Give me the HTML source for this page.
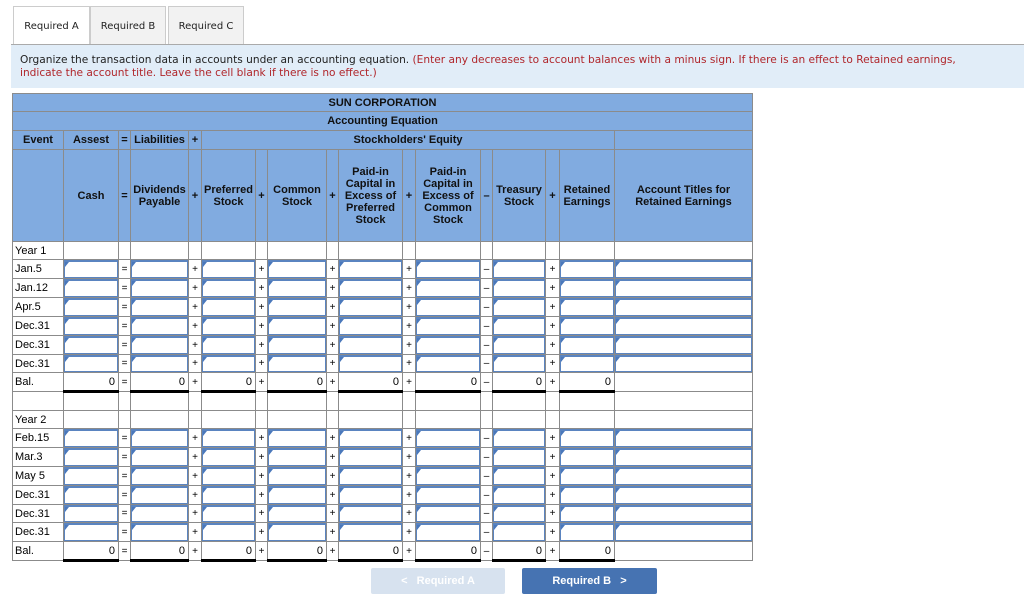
<!DOCTYPE html>
<html><head><meta charset="utf-8"><style>
body{margin:0;background:#fff;font-family:"Liberation Sans",Arial,sans-serif;width:1024px;height:601px;overflow:hidden;position:relative}
.tabs{position:absolute;left:13px;top:6px;height:38px}
.tab{position:absolute;top:0;height:38px;border:1px solid #ccc;border-bottom:none;background:#f2f2f2;font-family:"DejaVu Sans",sans-serif;font-size:10px;line-height:40px;text-align:center;color:#222}
.bar{position:absolute;left:11px;top:44px;width:1013px;height:43px;background:#e1edf8;border-top:1px solid #aaa}
.bar p{margin:0;padding:9px 0 0 9px;width:972px;font-family:"DejaVu Sans",sans-serif;font-size:10.6px;line-height:13px;color:#222}
.bar span{color:#b0262b}
table{position:absolute;left:12px;top:93px;border-collapse:collapse;table-layout:fixed;font-size:11px}
td{border:1px solid #8b8b8b;padding:0;overflow:hidden;white-space:nowrap}
.h td{background:#81abe0;font-weight:bold;text-align:center;color:#111}
td.ev{padding-left:2px;text-align:left}
td.op{text-align:center;font-size:10px}
td.in{position:relative}
td.in div{position:absolute;left:0;top:0;right:0;bottom:0;border:1px solid #5a84c0;border-top-width:2px;background:#fff}
td.in div:before{content:"";position:absolute;left:0;top:0;border-top:5px solid #4a78bb;border-right:4px solid transparent}
td.v{text-align:right;padding-right:3px;border-bottom:3px solid #000}
.btn{position:absolute;top:568px;height:26px;font-size:11px;font-weight:bold;color:#fff;text-align:center;line-height:26px;border-radius:2px}
</style></head><body>
<div class="tabs">
<div class="tab" style="left:0;width:75px;background:#fff;height:39px">Required A</div>
<div class="tab" style="left:77px;width:74px">Required B</div>
<div class="tab" style="left:155px;width:74px">Required C</div>
</div>
<div class="bar"><p>Organize the transaction data in accounts under an accounting equation. <span>(Enter any decreases to account balances with a minus sign. If there is an effect to Retained earnings, indicate the account title. Leave the cell blank if there is no effect.)</span></p></div>

<table>
<colgroup>
<col style="width:51px"><col style="width:55px"><col style="width:12px"><col style="width:58px"><col style="width:13px"><col style="width:54px"><col style="width:12px"><col style="width:59px"><col style="width:12px"><col style="width:64px"><col style="width:13px"><col style="width:65px"><col style="width:12px"><col style="width:53px"><col style="width:14px"><col style="width:55px"><col style="width:138px">
</colgroup>
<tr class="h" style="height:18px"><td colspan="17">SUN CORPORATION</td></tr>
<tr class="h" style="height:19px"><td colspan="17">Accounting Equation</td></tr>
<tr class="h" style="height:19px"><td>Event</td><td>Assest</td><td>=</td><td>Liabilities</td><td>+</td><td colspan="11">Stockholders' Equity</td><td></td></tr>
<tr class="h" style="height:92px;line-height:12px"><td></td><td>Cash</td><td>=</td><td>Dividends<br>Payable</td><td>+</td><td>Preferred<br>Stock</td><td>+</td><td>Common<br>Stock</td><td>+</td><td>Paid-in<br>Capital in<br>Excess of<br>Preferred<br>Stock</td><td>+</td><td>Paid-in<br>Capital in<br>Excess of<br>Common<br>Stock</td><td>–</td><td>Treasury<br>Stock</td><td>+</td><td>Retained<br>Earnings</td><td>Account Titles for<br>Retained Earnings</td></tr>
<tr style="height:18px"><td class="ev">Year 1</td><td></td><td></td><td></td><td></td><td></td><td></td><td></td><td></td><td></td><td></td><td></td><td></td><td></td><td></td><td></td><td></td></tr>
<tr style="height:19px"><td class="ev">Jan.5</td><td class="in"><div></div></td><td class="op">=</td><td class="in"><div></div></td><td class="op">+</td><td class="in"><div></div></td><td class="op">+</td><td class="in"><div></div></td><td class="op">+</td><td class="in"><div></div></td><td class="op">+</td><td class="in"><div></div></td><td class="op">–</td><td class="in"><div></div></td><td class="op">+</td><td class="in"><div></div></td><td class="in"><div></div></td></tr>
<tr style="height:19px"><td class="ev">Jan.12</td><td class="in"><div></div></td><td class="op">=</td><td class="in"><div></div></td><td class="op">+</td><td class="in"><div></div></td><td class="op">+</td><td class="in"><div></div></td><td class="op">+</td><td class="in"><div></div></td><td class="op">+</td><td class="in"><div></div></td><td class="op">–</td><td class="in"><div></div></td><td class="op">+</td><td class="in"><div></div></td><td class="in"><div></div></td></tr>
<tr style="height:19px"><td class="ev">Apr.5</td><td class="in"><div></div></td><td class="op">=</td><td class="in"><div></div></td><td class="op">+</td><td class="in"><div></div></td><td class="op">+</td><td class="in"><div></div></td><td class="op">+</td><td class="in"><div></div></td><td class="op">+</td><td class="in"><div></div></td><td class="op">–</td><td class="in"><div></div></td><td class="op">+</td><td class="in"><div></div></td><td class="in"><div></div></td></tr>
<tr style="height:19px"><td class="ev">Dec.31</td><td class="in"><div></div></td><td class="op">=</td><td class="in"><div></div></td><td class="op">+</td><td class="in"><div></div></td><td class="op">+</td><td class="in"><div></div></td><td class="op">+</td><td class="in"><div></div></td><td class="op">+</td><td class="in"><div></div></td><td class="op">–</td><td class="in"><div></div></td><td class="op">+</td><td class="in"><div></div></td><td class="in"><div></div></td></tr>
<tr style="height:19px"><td class="ev">Dec.31</td><td class="in"><div></div></td><td class="op">=</td><td class="in"><div></div></td><td class="op">+</td><td class="in"><div></div></td><td class="op">+</td><td class="in"><div></div></td><td class="op">+</td><td class="in"><div></div></td><td class="op">+</td><td class="in"><div></div></td><td class="op">–</td><td class="in"><div></div></td><td class="op">+</td><td class="in"><div></div></td><td class="in"><div></div></td></tr>
<tr style="height:18px"><td class="ev">Dec.31</td><td class="in"><div></div></td><td class="op">=</td><td class="in"><div></div></td><td class="op">+</td><td class="in"><div></div></td><td class="op">+</td><td class="in"><div></div></td><td class="op">+</td><td class="in"><div></div></td><td class="op">+</td><td class="in"><div></div></td><td class="op">–</td><td class="in"><div></div></td><td class="op">+</td><td class="in"><div></div></td><td class="in"><div></div></td></tr>
<tr style="height:19px"><td class="ev">Bal.</td><td class="v">0</td><td class="op">=</td><td class="v">0</td><td class="op">+</td><td class="v">0</td><td class="op">+</td><td class="v">0</td><td class="op">+</td><td class="v">0</td><td class="op">+</td><td class="v">0</td><td class="op">–</td><td class="v">0</td><td class="op">+</td><td class="v">0</td><td></td></tr>
<tr style="height:19px"><td></td><td></td><td></td><td></td><td></td><td></td><td></td><td></td><td></td><td></td><td></td><td></td><td></td><td></td><td></td><td></td><td></td></tr>
<tr style="height:18px"><td class="ev">Year 2</td><td></td><td></td><td></td><td></td><td></td><td></td><td></td><td></td><td></td><td></td><td></td><td></td><td></td><td></td><td></td><td></td></tr>
<tr style="height:19px"><td class="ev">Feb.15</td><td class="in"><div></div></td><td class="op">=</td><td class="in"><div></div></td><td class="op">+</td><td class="in"><div></div></td><td class="op">+</td><td class="in"><div></div></td><td class="op">+</td><td class="in"><div></div></td><td class="op">+</td><td class="in"><div></div></td><td class="op">–</td><td class="in"><div></div></td><td class="op">+</td><td class="in"><div></div></td><td class="in"><div></div></td></tr>
<tr style="height:19px"><td class="ev">Mar.3</td><td class="in"><div></div></td><td class="op">=</td><td class="in"><div></div></td><td class="op">+</td><td class="in"><div></div></td><td class="op">+</td><td class="in"><div></div></td><td class="op">+</td><td class="in"><div></div></td><td class="op">+</td><td class="in"><div></div></td><td class="op">–</td><td class="in"><div></div></td><td class="op">+</td><td class="in"><div></div></td><td class="in"><div></div></td></tr>
<tr style="height:19px"><td class="ev">May 5</td><td class="in"><div></div></td><td class="op">=</td><td class="in"><div></div></td><td class="op">+</td><td class="in"><div></div></td><td class="op">+</td><td class="in"><div></div></td><td class="op">+</td><td class="in"><div></div></td><td class="op">+</td><td class="in"><div></div></td><td class="op">–</td><td class="in"><div></div></td><td class="op">+</td><td class="in"><div></div></td><td class="in"><div></div></td></tr>
<tr style="height:19px"><td class="ev">Dec.31</td><td class="in"><div></div></td><td class="op">=</td><td class="in"><div></div></td><td class="op">+</td><td class="in"><div></div></td><td class="op">+</td><td class="in"><div></div></td><td class="op">+</td><td class="in"><div></div></td><td class="op">+</td><td class="in"><div></div></td><td class="op">–</td><td class="in"><div></div></td><td class="op">+</td><td class="in"><div></div></td><td class="in"><div></div></td></tr>
<tr style="height:18px"><td class="ev">Dec.31</td><td class="in"><div></div></td><td class="op">=</td><td class="in"><div></div></td><td class="op">+</td><td class="in"><div></div></td><td class="op">+</td><td class="in"><div></div></td><td class="op">+</td><td class="in"><div></div></td><td class="op">+</td><td class="in"><div></div></td><td class="op">–</td><td class="in"><div></div></td><td class="op">+</td><td class="in"><div></div></td><td class="in"><div></div></td></tr>
<tr style="height:19px"><td class="ev">Dec.31</td><td class="in"><div></div></td><td class="op">=</td><td class="in"><div></div></td><td class="op">+</td><td class="in"><div></div></td><td class="op">+</td><td class="in"><div></div></td><td class="op">+</td><td class="in"><div></div></td><td class="op">+</td><td class="in"><div></div></td><td class="op">–</td><td class="in"><div></div></td><td class="op">+</td><td class="in"><div></div></td><td class="in"><div></div></td></tr>
<tr style="height:19px"><td class="ev">Bal.</td><td class="v">0</td><td class="op">=</td><td class="v">0</td><td class="op">+</td><td class="v">0</td><td class="op">+</td><td class="v">0</td><td class="op">+</td><td class="v">0</td><td class="op">+</td><td class="v">0</td><td class="op">–</td><td class="v">0</td><td class="op">+</td><td class="v">0</td><td></td></tr>
</table>

<div class="btn" style="left:371px;width:134px;background:#d7e2ef;color:#fff">&lt;&nbsp;&nbsp; Required A</div>
<div class="btn" style="left:522px;width:135px;background:#4673b2">Required B &nbsp;&nbsp;&gt;</div>
</body></html>
